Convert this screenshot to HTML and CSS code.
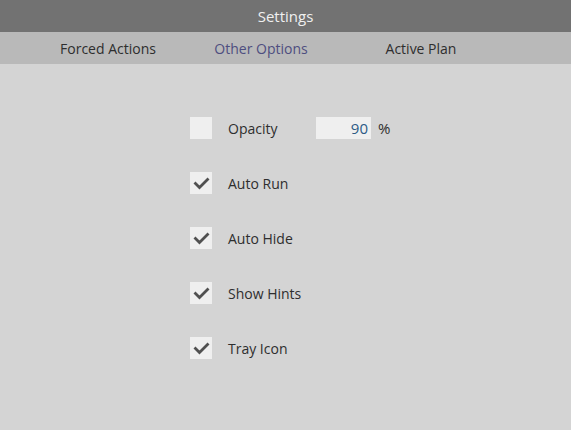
FILE: index.html
```html
<!DOCTYPE html>
<html>
<head>
	<title>Settings</title>
	<meta charset="utf-8">
	<link rel="stylesheet" href="styles.css">
</head>
<body>
<!-- title -->
<div class="titleBar">Settings</div>

<!-- tabs -->
<div class="tabBar">
	<span class="tab tab1">Forced Actions</span>
	<span class="tab tab2 active">Other Options</span>
	<span class="tab tab3">Active Plan</span>
</div>

<!-- options -->
<div class="options">
	<div class="row">
		<span class="box"></span>
		<span class="label">Opacity</span>
		<span class="numBox">90</span>
		<span class="unit">%</span>
	</div>
	<div class="row">
		<span class="box"><svg width="22" height="22" viewBox="0 0 22 22"><path d="M4.5 10.5 L9.5 15.5 L18.5 6.5" fill="none" stroke="#505050" stroke-width="2.8"/></svg></span>
		<span class="label">Auto Run</span>
	</div>
	<div class="row">
		<span class="box"><svg width="22" height="22" viewBox="0 0 22 22"><path d="M4.5 10.5 L9.5 15.5 L18.5 6.5" fill="none" stroke="#505050" stroke-width="2.8"/></svg></span>
		<span class="label">Auto Hide</span>
	</div>
	<div class="row">
		<span class="box"><svg width="22" height="22" viewBox="0 0 22 22"><path d="M4.5 10.5 L9.5 15.5 L18.5 6.5" fill="none" stroke="#505050" stroke-width="2.8"/></svg></span>
		<span class="label">Show Hints</span>
	</div>
	<div class="row">
		<span class="box"><svg width="22" height="22" viewBox="0 0 22 22"><path d="M4.5 10.5 L9.5 15.5 L18.5 6.5" fill="none" stroke="#505050" stroke-width="2.8"/></svg></span>
		<span class="label">Tray Icon</span>
	</div>
</div>
</body>
</html>
```

FILE: styles.css
```css
html,body{
	padding: 0;
	margin: 0;
	height:100%;
}

body{
	background-color: #d4d4d4;
	font-family: "Open Sans", "Liberation Sans", sans-serif;
	font-size: 14px;
	color:#2e2e2e;
}

.titleBar{
	height:32px;
	line-height: 32px;
	background-color: #727272;
	color:#f0f0f0;
	text-align: center;
	font-size: 15px;
}

.tabBar{
	height:32px;
	background-color: #b9b9b9;
	display: flex;
	align-items: center;
}
.tab{
	text-align: center;
	color:#2e2e2e;
	white-space: nowrap;
}
.tab1{
	width:160px;
	margin-left: 28px;
}
.tab2{
	width:146px;
}
.tab3{
	width:160px;
	margin-left: 7px;
}
.tab.active{
	color:#4e4e80;
}

.options{
	padding-top: 53px;
	padding-left: 190px;
	display: flex;
	flex-direction: column;
	gap:33px;
}
.row{
	display: flex;
	align-items: center;
	height:22px;
}
.box{
	width:22px;
	height:22px;
	background-color: #efefef;
	display: block;
	flex-shrink: 0;
}
.box svg{
	display: block;
}
.label{
	margin-left: 16px;
	width:88px;
	white-space: nowrap;
}
.numBox{
	width:55px;
	height:22px;
	line-height: 22px;
	background-color: #efefef;
	color:#2c5b86;
	text-align: right;
	box-sizing: border-box;
	padding-right: 3px;
	font-size: 15px;
}
.unit{
	margin-left: 7px;
	font-size: 15px;
}
```
